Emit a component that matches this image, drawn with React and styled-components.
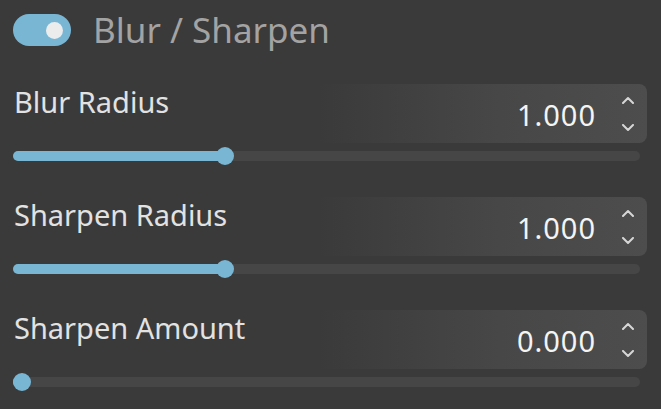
import styled, { createGlobalStyle } from "styled-components";

const GlobalStyle = createGlobalStyle`
	body {
		margin: 0;
		background: #3a3a3a;
		font-family: "Noto Sans", "DejaVu Sans", sans-serif;
	}
`;

const Panel = styled.div`
	display: flex;
	flex-direction: column;
	width: 661px;
	height: 409px;
	box-sizing: border-box;
	padding: 14px 14px 0 13px;
	background: #3a3a3a;
`;

const Header = styled.div`
	display: flex;
	align-items: center;
	gap: 22px;
	height: 32px;
	margin-bottom: 38px;
`;

const Toggle = styled.div`
	display: flex;
	align-items: center;
	justify-content: ${(p) => (p.on ? "flex-end" : "flex-start")};
	width: 58px;
	height: 32px;
	box-sizing: border-box;
	padding: 0 8px;
	border-radius: 16px;
	background: ${(p) => (p.on ? "#78b6d4" : "#555")};
`;

const Knob = styled.div`
	width: 17px;
	height: 17px;
	border-radius: 50%;
	background: #ececec;
`;

const Title = styled.div`
	font-size: 35px;
	line-height: 36px;
	color: #a3a3a3;
	margin-top: 0;
`;

const Rows = styled.div`
	display: flex;
	flex-direction: column;
	gap: 28px;
`;

const Row = styled.div`
	display: flex;
	flex-direction: column;
`;

const TopLine = styled.div`
	display: flex;
	justify-content: space-between;
	align-items: flex-start;
`;

const Label = styled.div`
	font-size: 29px;
	line-height: 36px;
	color: #e2e2e2;
	padding-left: 1px;
`;

const SpinBox = styled.div`
	display: flex;
	align-items: center;
	justify-content: flex-end;
	width: 330px;
	height: 59px;
	border-radius: 8px;
	background: linear-gradient(to right, #3a3a3a 0%, #474747 55%, #4d4d4d 100%);
`;

const Value = styled.div`
	font-size: 29px;
	line-height: 36px;
	letter-spacing: 1px;
	color: #f4f4f4;
	margin-top: 2px;
`;

const Arrows = styled.div`
	display: flex;
	flex-direction: column;
	align-items: center;
	justify-content: space-between;
	height: 36px;
	width: 24px;
	margin: 0 7px 0 20px;
`;

const SliderWrap = styled.div`
	position: relative;
	display: flex;
	align-items: center;
	height: 26px;
	margin-right: 7px;
`;

const Track = styled.div`
	flex: 1;
	height: 10px;
	border-radius: 5px;
	background: #464646;
	overflow: hidden;
`;

const Fill = styled.div`
	height: 100%;
	background: #78b6d4;
`;

const Handle = styled.div`
	position: absolute;
	top: 4px;
	width: 18px;
	height: 18px;
	margin-left: -9px;
	border-radius: 50%;
	background: #78b6d4;
`;

const Chevron = ({ up }) => (
	<svg width="14" height="8" viewBox="0 0 14 8">
		<polyline
			points={up ? "2,7 7,2 12,7" : "2,1 7,6 12,1"}
			fill="none"
			stroke="#d6d6d6"
			strokeWidth="2"
			strokeLinecap="round"
			strokeLinejoin="round"
		/>
	</svg>
);

const params = [
	{ label: "Blur Radius", value: 1, max: 3 },
	{ label: "Sharpen Radius", value: 1, max: 3 },
	{ label: "Sharpen Amount", value: 0, max: 3 },
];

const Param = ({ label, value, max }) => {
	const frac = value / max;
	// handle centre travels from 9px to (width - 9px)
	const pos = `calc(9px + (100% - 18px) * ${frac})`;
	return (
		<Row>
			<TopLine>
				<Label>{label}</Label>
				<SpinBox>
					<Value>{value.toFixed(3)}</Value>
					<Arrows>
						<Chevron up />
						<Chevron />
					</Arrows>
				</SpinBox>
			</TopLine>
			<SliderWrap>
				<Track>
					<Fill style={{ width: pos }} />
				</Track>
				<Handle style={{ left: pos }} />
			</SliderWrap>
		</Row>
	);
};

export default function App() {
	return (
		<>
			<GlobalStyle />
			<Panel>
				<Header>
					<Toggle on>
						<Knob />
					</Toggle>
					<Title>Blur / Sharpen</Title>
				</Header>
				<Rows>
					{params.map((p) => (
						<Param key={p.label} {...p} />
					))}
				</Rows>
			</Panel>
		</>
	);
}
